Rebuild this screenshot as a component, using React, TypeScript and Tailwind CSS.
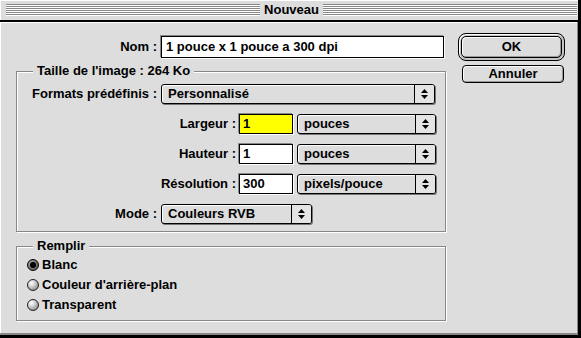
import React from 'react';

function Arrows() {
  return (
    <span className="w-[20px] h-full border-l border-black bg-[#e4e4e4] flex flex-col items-center justify-center gap-[2px] rounded-r-[2px]">
      <svg width="7" height="4" viewBox="0 0 7 4">
        <polygon points="0,4 3.5,0 7,4" fill="#000" />
      </svg>
      <svg width="7" height="4" viewBox="0 0 7 4">
        <polygon points="0,0 7,0 3.5,4" fill="#000" />
      </svg>
    </span>
  );
}

function Popup({ width, label }: { width: string; label: string }) {
  return (
    <div
      className={`${width} h-[20px] flex items-center rounded-[3px] border border-black bg-[#dddddd] shadow-[1px_1px_0_#777,inset_1px_1px_0_#fff]`}
    >
      <span className="flex-1 pl-[6px] leading-[18px] whitespace-nowrap">{label}</span>
      <Arrows />
    </div>
  );
}

function Field({ width, value, yellow }: { width: string; value: string; yellow?: boolean }) {
  return (
    <div
      className={`${width} h-[20px] border border-black px-[3px] leading-[18px] shadow-[-1px_-1px_0_#888,1px_1px_0_#fff] ${
        yellow ? 'bg-[#ffff00]' : 'bg-white'
      }`}
    >
      {value}
    </div>
  );
}

function Radio({ label, checked }: { label: string; checked?: boolean }) {
  return (
    <div className="h-[20px] flex items-center gap-[3px] pl-[10px]">
      {checked ? (
        <span className="w-[12px] h-[12px] rounded-full border border-black bg-[radial-gradient(circle_at_35%_35%,#aaa,#444)] flex items-center justify-center">
          <span className="w-[6px] h-[6px] rounded-full bg-black" />
        </span>
      ) : (
        <span className="w-[12px] h-[12px] rounded-full border border-[#222] bg-[radial-gradient(circle_at_35%_30%,#fff,#d4d4d4_35%,#707070)]" />
      )}
      <span>{label}</span>
    </div>
  );
}

function Group({ title, className, children }: { title: string; className: string; children: React.ReactNode }) {
  return (
    <div
      className={`relative w-[430px] border border-[#888] shadow-[1px_1px_0_#fff,inset_1px_1px_0_#fff] ${className}`}
    >
      <span className="absolute left-[16px] top-[-9px] px-[4px] leading-[16px] bg-[#dddddd]">{title}</span>
      {children}
    </div>
  );
}

export default function App() {
  return (
    <div className="w-[581px] h-[338px] flex flex-col bg-[#dddddd] border-r-[3px] border-b-[3px] border-black font-['Liberation_Sans',Arial,sans-serif] font-bold text-[13px] text-black">
      {/* title bar */}
      <div className="h-[22px] shrink-0 flex items-center pl-[6px] pr-[1px] border-b-2 border-black shadow-[inset_1px_1px_0_#fff]">
        <div className="flex-1 h-[12px] bg-[repeating-linear-gradient(to_bottom,#888_0,#888_1px,#fff_1px,#fff_2px)]" />
        <span className="px-[4px] leading-[16px]">Nouveau</span>
        <div className="flex-1 h-[12px] bg-[repeating-linear-gradient(to_bottom,#888_0,#888_1px,#fff_1px,#fff_2px)]" />
      </div>

      {/* content */}
      <div className="flex-1 flex shadow-[inset_-1px_-2px_0_#888,inset_1px_1px_0_#fff]">
        <div className="w-[446px] pl-[16px] flex flex-col">
          <div className="mt-[14px] flex items-center gap-[4px]">
            <span className="w-[141px] text-right">Nom :</span>
            <div className="w-[283px] h-[22px] border border-black bg-white px-[4px] leading-[20px] shadow-[-1px_-1px_0_#888,1px_1px_0_#fff]">
              1 pouce x 1 pouce a 300 dpi
            </div>
          </div>

          <Group title="Taille de l'image : 264 Ko" className="mt-[13px] h-[161px] pt-[12px] flex flex-col gap-[10px]">
            <div className="flex items-center gap-[4px]">
              <span className="w-[140px] text-right">Formats prédéfinis :</span>
              <Popup width="w-[274px]" label="Personnalisé" />
            </div>
            <div className="flex items-center">
              <span className="w-[219px] text-right mr-[3px]">Largeur :</span>
              <Field width="w-[54px]" value="1" yellow />
              <span className="w-[4px]" />
              <Popup width="w-[139px]" label="pouces" />
            </div>
            <div className="flex items-center">
              <span className="w-[219px] text-right mr-[3px]">Hauteur :</span>
              <Field width="w-[54px]" value="1" />
              <span className="w-[4px]" />
              <Popup width="w-[139px]" label="pouces" />
            </div>
            <div className="flex items-center">
              <span className="w-[219px] text-right mr-[3px]">Résolution :</span>
              <Field width="w-[54px]" value="300" />
              <span className="w-[4px]" />
              <Popup width="w-[139px]" label="pixels/pouce" />
            </div>
            <div className="flex items-center gap-[4px]">
              <span className="w-[140px] text-right">Mode :</span>
              <Popup width="w-[151px]" label="Couleurs RVB" />
            </div>
          </Group>

          <Group title="Remplir" className="mt-[14px] h-[75px] pt-[8px] flex flex-col">
            <Radio label="Blanc" checked />
            <Radio label="Couleur d'arrière-plan" />
            <Radio label="Transparent" />
          </Group>
        </div>

        <div className="ml-[12px] mt-[11px] flex flex-col items-start">
          <div className="w-[107px] h-[28px] rounded-[8px] border border-black bg-[#c4c4c4] p-[2px] shadow-[inset_1px_1px_0_#fff]">
            <button className="w-full h-full rounded-[5px] border border-black bg-[#dddddd] shadow-[inset_1px_1px_0_#fff,inset_-1px_-1px_0_#999] leading-[20px]">
              OK
            </button>
          </div>
          <button className="mt-[4px] ml-[4px] w-[102px] h-[18px] rounded-[4px] border border-black bg-[#dddddd] shadow-[inset_1px_1px_0_#fff,inset_-1px_-1px_0_#999] leading-[16px]">
            Annuler
          </button>
        </div>
      </div>
    </div>
  );
}
